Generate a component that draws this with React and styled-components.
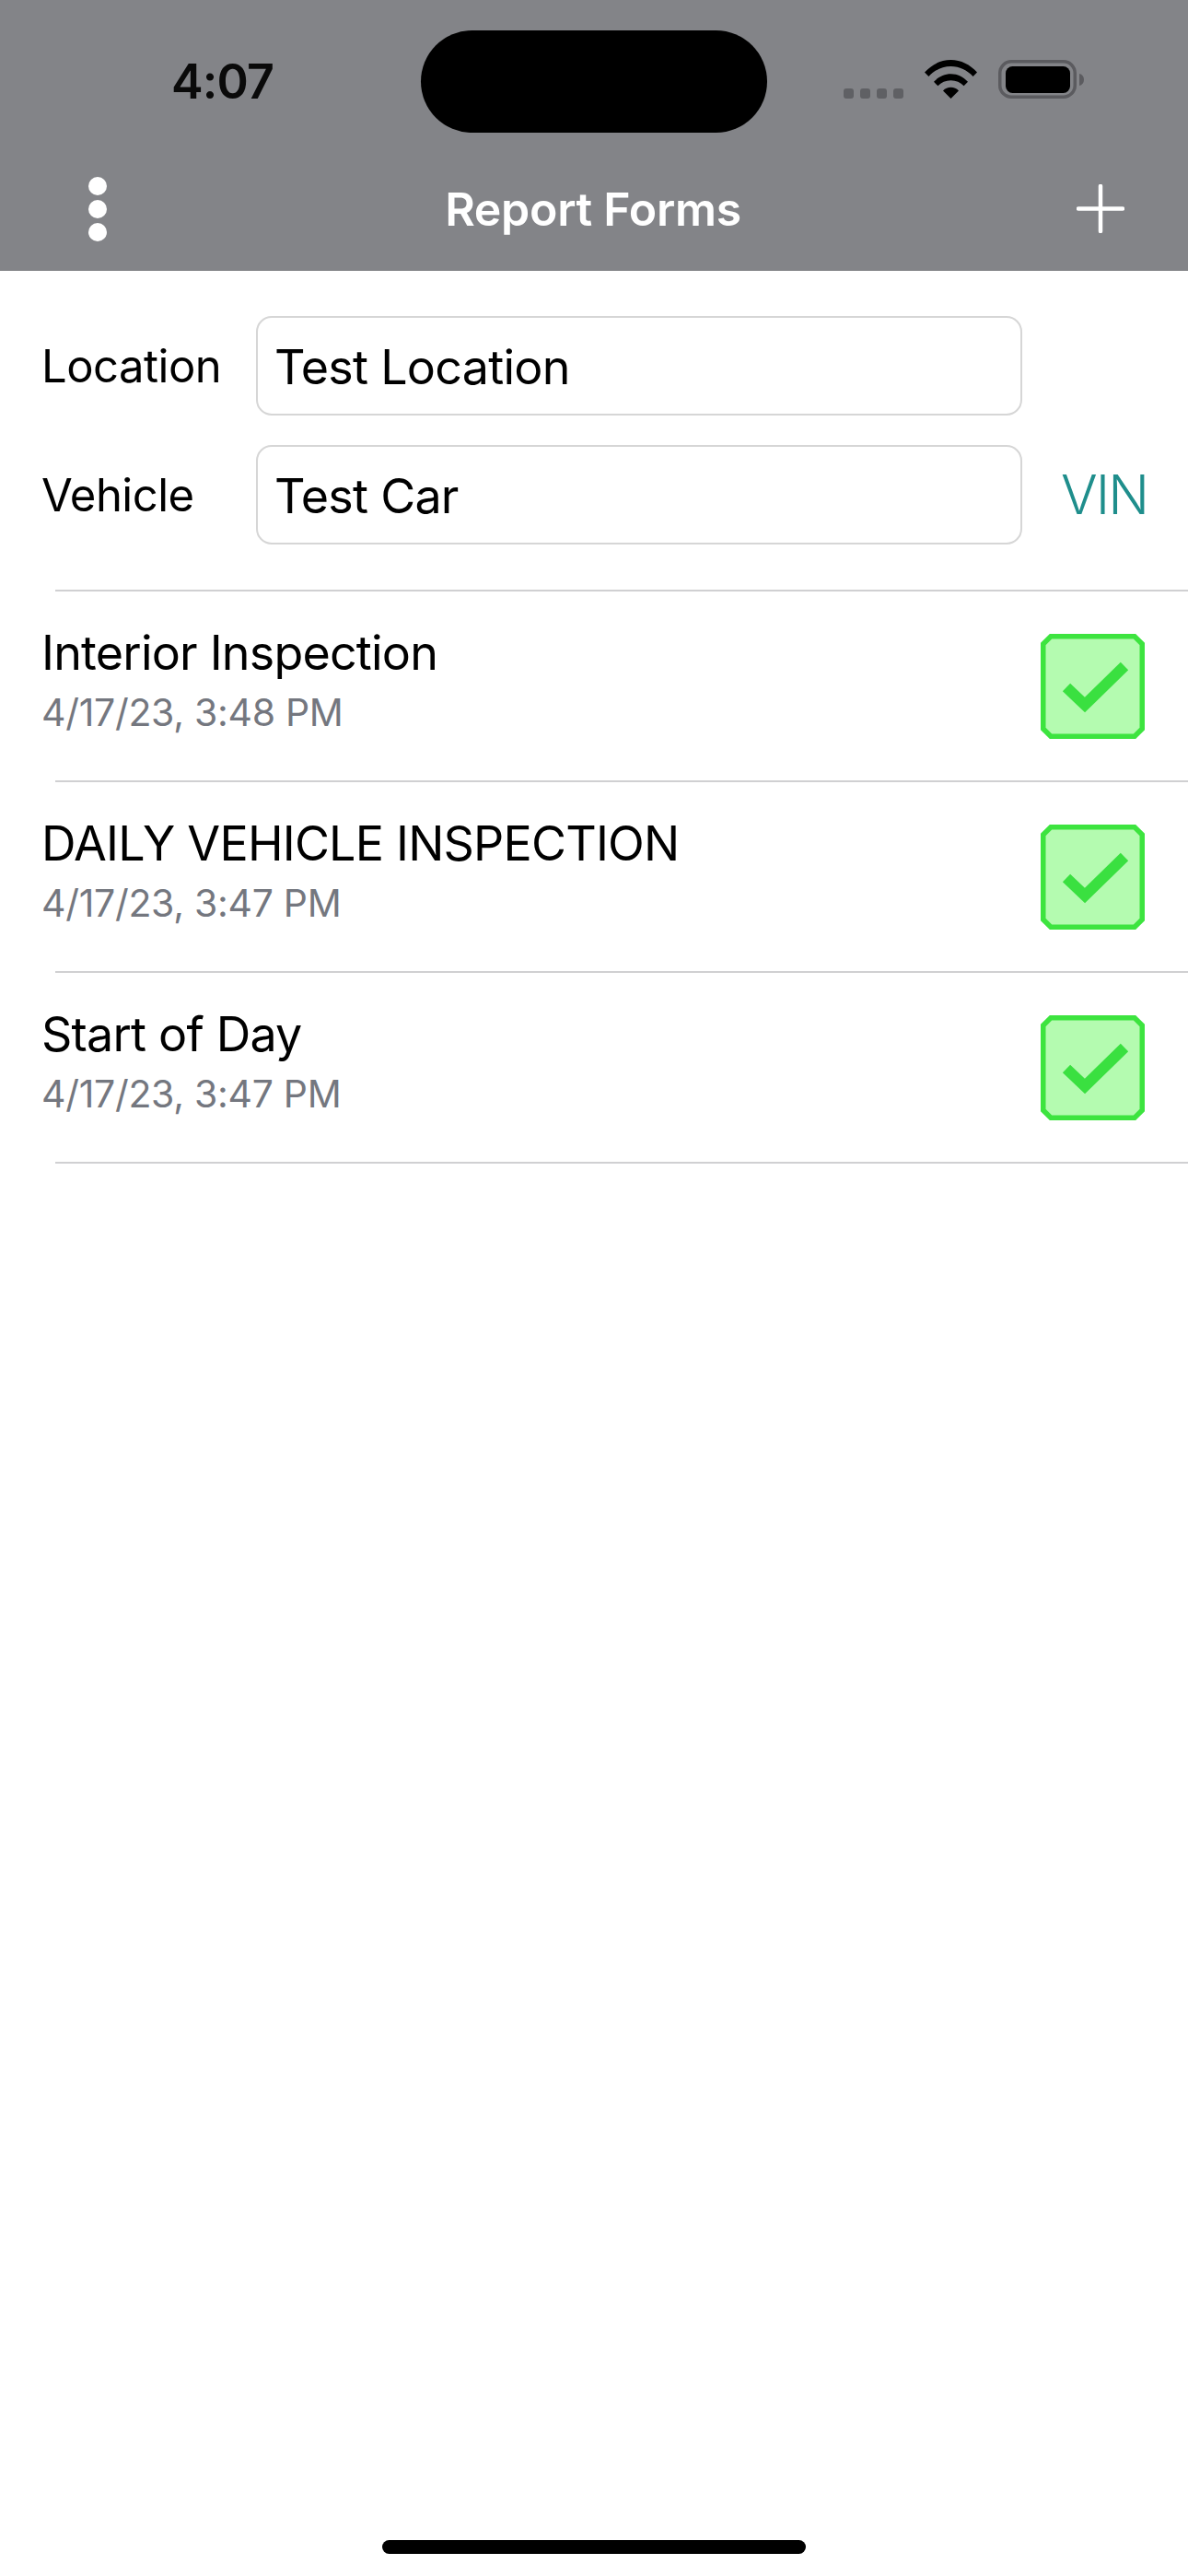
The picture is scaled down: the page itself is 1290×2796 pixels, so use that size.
import React from 'react'
import styled, { createGlobalStyle } from 'styled-components'

const GlobalStyle = createGlobalStyle`
  html, body {
    margin: 0;
    padding: 0;
    background: #fff;
  }
  body {
    font-family: Inter, "Noto Sans", "Liberation Sans", sans-serif;
  }
`

const Page = styled.div`
  display: flex;
  flex-direction: column;
  width: 1290px;
  height: 2796px;
  background: #fff;
  overflow: hidden;
`

const Header = styled.header`
  display: flex;
  flex-direction: column;
  height: 294px;
  background: #838488;
`

const StatusBar = styled.div`
  display: grid;
  grid-template-columns: 457px 376px 1fr;
  height: 144px;
  padding-top: 33px;
  box-sizing: border-box;
`

const Time = styled.div`
  padding: 26px 0 0 186px;
  font-size: 52px;
  line-height: 60px;
  font-weight: 600;
  letter-spacing: -0.8px;
  color: #0a0a0a;
`

const Island = styled.div`
  height: 111px;
  border-radius: 56px;
  background: #000;
`

const StatusIcons = styled.div`
  display: flex;
  align-items: flex-end;
  height: 74px;
  padding-left: 83px;
`

const SignalDots = styled.div`
  display: flex;
  gap: 7px;
  margin-right: 23px;
`

const SignalDot = styled.span`
  width: 11px;
  height: 11px;
  border-radius: 3px;
  background: #5f6064;
`

const NavBar = styled.nav`
  display: grid;
  grid-template-columns: 96px 20px 1fr 52px;
  align-items: center;
  height: 150px;
  padding-right: 69px;
  padding-top: 15px;
  box-sizing: border-box;
`

const MenuButton = styled.div`
  grid-column: 2;
  display: flex;
  flex-direction: column;
  gap: 5px;
`

const MenuDot = styled.span`
  width: 20px;
  height: 20px;
  border-radius: 50%;
  background: #fff;
`

const Title = styled.h1`
  margin: 0;
  padding-left: 3px;
  text-align: center;
  font-size: 50px;
  line-height: 60px;
  font-weight: 600;
  letter-spacing: -0.3px;
  color: #fff;
`

const Form = styled.section`
  display: flex;
  flex-direction: column;
  gap: 32px;
  padding: 49px 0 49px 45px;
`

const FormRow = styled.div`
  display: grid;
  grid-template-columns: 233px 832px 1fr;
  align-items: center;
  height: 108px;
`

const Label = styled.label`
  padding-top: 2px;
  font-size: 49px;
  line-height: 60px;
  letter-spacing: -0.5px;
  color: #000;
`

const Field = styled.div`
  height: 108px;
  padding-left: 18px;
  border: 2px solid #d6d6d6;
  border-radius: 17px;
  box-sizing: border-box;
  font-size: 52px;
  line-height: 107px;
  letter-spacing: -0.75px;
  color: #000;
`

const VinButton = styled.div`
  padding-left: 42px;
  font-size: 59px;
  line-height: 70px;
  font-weight: 300;
  letter-spacing: -2px;
  color: #1f8e8c;
`

const Divider = styled.div`
  height: 2px;
  margin-left: 60px;
  background: #d0d0d2;
`

const ReportRow = styled.div`
  display: flex;
  align-items: center;
  justify-content: space-between;
  height: 205px;
  padding: 0 47px 0 45px;
  box-sizing: border-box;
`

const ReportText = styled.div`
  display: flex;
  flex-direction: column;
  gap: 5px;
  margin-bottom: 15px;
`

const ReportName = styled.div`
  font-size: 52px;
  line-height: 66px;
  letter-spacing: -0.8px;
  color: #000;
`

const ReportDate = styled.div`
  font-size: 41px;
  line-height: 52px;
  letter-spacing: -0.3px;
  color: #74777f;
`

const Spacer = styled.div`
  flex: 1;
`

const HomeBar = styled.div`
  align-self: center;
  width: 460px;
  height: 15px;
  margin-bottom: 24px;
  border-radius: 8px;
  background: #000;
`

const WifiIcon = () => (
  <svg width="57" height="42" viewBox="0 0 57 42" style={{ marginRight: 23, display: 'block' }}>
    <path d="M0 13.5C7.5 5.2 17.5 0 28.5 0S49.5 5.2 57 13.5L52.6 18C46.3 11.2 37.9 7 28.5 7S10.7 11.2 4.4 18Z" fill="#000" />
    <path d="M10 23.8C14.8 18.6 21.3 15.3 28.5 15.3S42.2 18.6 47 23.8L42.6 28.3C39 24.5 34 22.3 28.5 22.3S18 24.5 14.4 28.3Z" fill="#000" />
    <path d="M20 33.4C22.2 31.2 25.2 29.8 28.5 29.8S34.8 31.2 37 33.4L28.5 42Z" fill="#000" />
  </svg>
)

const BatteryIcon = () => (
  <svg width="94" height="42" viewBox="0 0 94 42" style={{ display: 'block' }}>
    <rect x="1.75" y="1.75" width="81.5" height="38.5" rx="12.5" fill="none" stroke="#5b5b5f" strokeWidth="3.5" />
    <rect x="8" y="7" width="70" height="29" rx="7.5" fill="#000" />
    <path d="M88 15C91 15.6 93 18 93 21.5S91 27.4 88 28Z" fill="#5b5b5f" />
  </svg>
)

const PlusIcon = () => (
  <svg width="52" height="53" viewBox="0 0 52 53" style={{ display: 'block' }}>
    <path d="M26 2V51M2 26.5H50" stroke="#fff" strokeWidth="4.5" strokeLinecap="round" fill="none" />
  </svg>
)

const CheckBox = () => (
  <svg width="113" height="114" viewBox="0 0 113 114" style={{ display: 'block' }}>
    <path
      d="M11 2.75H102L110.25 11V103L102 111.25H11L2.75 103V11Z"
      fill="#b4fbb0"
      stroke="#3de43f"
      strokeWidth="5.5"
    />
    <path d="M28 58L48 77L91 35" fill="none" stroke="#3ae040" strokeWidth="12" />
  </svg>
)

const reports = [
  { name: 'Interior Inspection', date: '4/17/23, 3:48 PM' },
  { name: 'DAILY VEHICLE INSPECTION', date: '4/17/23, 3:47 PM' },
  { name: 'Start of Day', date: '4/17/23, 3:47 PM' },
]

export default function App() {
  return (
    <Page>
      <GlobalStyle />
      <Header>
        <StatusBar>
          <Time>4:07</Time>
          <Island />
          <StatusIcons>
            <SignalDots>
              {[0, 1, 2, 3].map(i => <SignalDot key={i} />)}
            </SignalDots>
            <WifiIcon />
            <BatteryIcon />
          </StatusIcons>
        </StatusBar>
        <NavBar>
          <MenuButton>
            <MenuDot />
            <MenuDot />
            <MenuDot />
          </MenuButton>
          <Title>Report Forms</Title>
          <PlusIcon />
        </NavBar>
      </Header>
      <Form>
        <FormRow>
          <Label>Location</Label>
          <Field>Test Location</Field>
        </FormRow>
        <FormRow>
          <Label>Vehicle</Label>
          <Field>Test Car</Field>
          <VinButton>VIN</VinButton>
        </FormRow>
      </Form>
      <Divider />
      {reports.map(report => (
        <React.Fragment key={report.name}>
          <ReportRow>
            <ReportText>
              <ReportName>{report.name}</ReportName>
              <ReportDate>{report.date}</ReportDate>
            </ReportText>
            <CheckBox />
          </ReportRow>
          <Divider />
        </React.Fragment>
      ))}
      <Spacer />
      <HomeBar />
    </Page>
  )
}
